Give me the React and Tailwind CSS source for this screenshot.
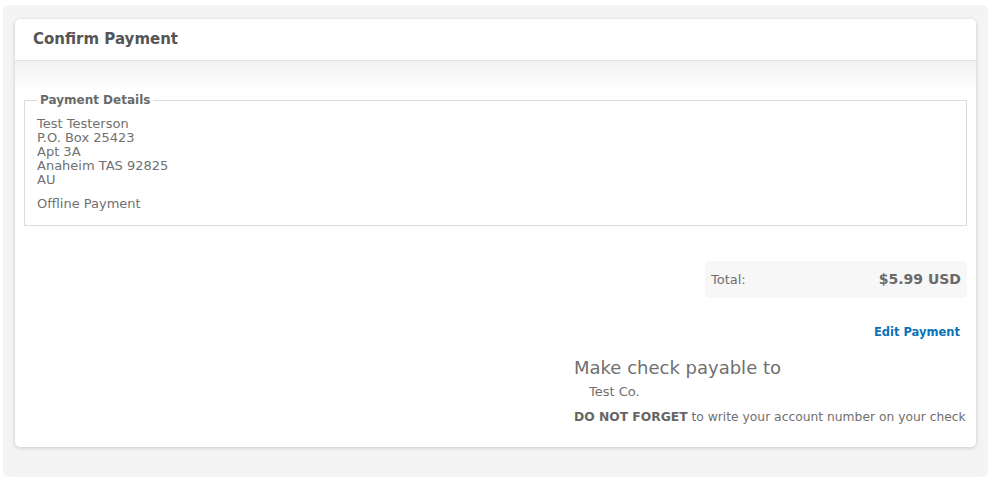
export default function App() {
  return (
    <div className="w-[995px] h-[481px] bg-white pt-[5px] pl-[3px] font-['DejaVu_Sans',Verdana,sans-serif] text-[12px] text-[#707070]">
      <div className="w-[985px] h-[472px] bg-[#f4f4f4] rounded-[6px] pt-[14px] pl-[12px]">
        <div className="w-[961px] h-[428px] bg-white rounded-[5px] shadow-[0_1px_4px_rgba(0,0,0,0.18)] overflow-hidden">
          <div className="h-[42px] border-b border-[#e4e4e4] px-[18px] flex items-center">
            <h2 className="text-[15px] font-bold text-[#555]">Confirm Payment</h2>
          </div>
          <div className="h-[32px] bg-gradient-to-b from-[#f3f3f3] to-white" />
          <div className="px-[9px]">
            <fieldset className="border border-[#dcdcdc] px-[12px] pb-[14px] text-[13px] leading-[14px]">
              <legend className="px-[3px] font-bold text-[#6a6a6a] text-[12px]">Payment Details</legend>
              <div className="pt-[10px]">
                <div>Test Testerson</div>
                <div>P.O. Box 25423</div>
                <div>Apt 3A</div>
                <div>Anaheim TAS 92825</div>
                <div>AU</div>
              </div>
              <div className="mt-[10px]">Offline Payment</div>
            </fieldset>
            <div className="flex justify-end mt-[35px]">
              <div className="w-[262px] h-[37px] bg-[#f7f7f7] rounded-[4px] flex items-center justify-between px-[6px]">
                <span className="text-[13px]">Total:</span>
                <span className="text-[14px] font-bold text-[#6a6a6a]">$5.99 USD</span>
              </div>
            </div>
            <div className="flex justify-end mt-[26px] pr-[7px]">
              <a className="text-[11.5px] font-bold text-[#0a73b7]">Edit Payment</a>
            </div>
            <div className="flex justify-end mt-[16px]">
              <div className="w-[393px]">
                <div className="text-[18px] leading-[22px]">Make check payable to</div>
                <div className="pl-[15px] mt-[3px] text-[13px]">Test Co.</div>
                <div className="mt-[6px] text-[12.3px] whitespace-nowrap"><b className="text-[#666]">DO NOT FORGET</b> to write your account number on your check</div>
              </div>
            </div>
          </div>
        </div>
      </div>
    </div>
  );
}
